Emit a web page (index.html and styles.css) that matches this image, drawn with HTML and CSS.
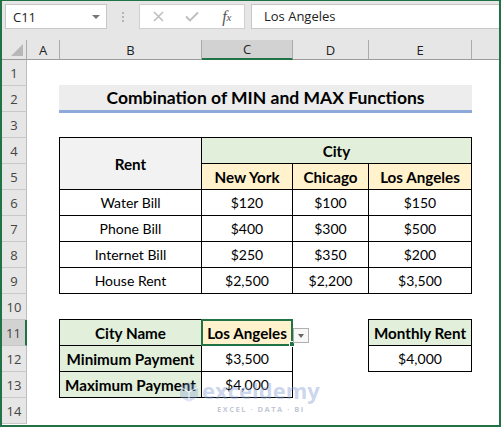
FILE: index.html
```html
<!DOCTYPE html>
<html>
<head>
<meta charset="utf-8">
<link rel="stylesheet" href="styles.css">
</head>
<body>
<div class="window">
  <div class="formula-bar">
    <div class="name-box"><span>C11</span><span class="caret"></span></div>
    <div class="dots"><span></span><span></span><span></span></div>
    <div class="fx-box">
      <span class="fx-btn"><svg width="11" height="11" viewBox="0 0 11 11"><path d="M1 1 L10 10 M10 1 L1 10" stroke="#bdbdbd" stroke-width="1.5" fill="none"/></svg></span>
      <span class="fx-btn"><svg width="14" height="11" viewBox="0 0 14 11"><path d="M1 5.5 L5 9.5 L13 1.5" stroke="#bdbdbd" stroke-width="1.8" fill="none"/></svg></span>
      <span class="fx-btn fx"><i>f</i><sub>x</sub></span>
    </div>
    <div class="formula-input">Los Angeles</div>
  </div>

  <div class="sheet">
    <div class="corner"><svg width="25" height="19" viewBox="0 0 25 19"><polygon points="21,16 21,4 9,16" fill="#b7b7b7"/></svg></div>
    <div class="ch">A</div>
    <div class="ch">B</div>
    <div class="ch sel">C</div>
    <div class="ch">D</div>
    <div class="ch">E</div>
    <div class="ch ch-last"></div>

    <div class="rh r1">1</div>
    <div class="rh r2">2</div>
    <div class="rh r3">3</div>
    <div class="rh r4">4</div>
    <div class="rh r5">5</div>
    <div class="rh r6">6</div>
    <div class="rh r7">7</div>
    <div class="rh r8">8</div>
    <div class="rh r9">9</div>
    <div class="rh r10">10</div>
    <div class="rh r11 sel">11</div>
    <div class="rh r12">12</div>
    <div class="rh r13">13</div>
    <div class="rh r14">14</div>

    <div class="title">Combination of MIN and MAX Functions</div>

    <div class="tbl tbl-rent">
      <div class="c bold gray span-rows">Rent</div>
      <div class="c bold green span-cols">City</div>
      <div class="c bold orange">New York</div>
      <div class="c bold orange">Chicago</div>
      <div class="c bold orange">Los Angeles</div>
      <div class="c">Water Bill</div><div class="c">$120</div><div class="c">$100</div><div class="c">$150</div>
      <div class="c">Phone Bill</div><div class="c">$400</div><div class="c">$300</div><div class="c">$500</div>
      <div class="c">Internet Bill</div><div class="c">$250</div><div class="c">$350</div><div class="c">$200</div>
      <div class="c">House Rent</div><div class="c">$2,500</div><div class="c">$2,200</div><div class="c">$3,500</div>
    </div>

    <div class="tbl tbl-pay">
      <div class="c bold green">City Name</div>
      <div class="c bold orange active">Los Angeles<span class="handle"></span><span class="dropdown"><span class="dd-arrow"></span></span></div>
      <div class="c bold green">Minimum Payment</div>
      <div class="c">$3,500</div>
      <div class="c bold green">Maximum Payment</div>
      <div class="c">$4,000</div>
    </div>

    <div class="tbl tbl-month">
      <div class="c bold green">Monthly Rent</div>
      <div class="c">$4,000</div>
    </div>

    <div class="watermark">
      <svg class="wm-icon" width="22" height="22" viewBox="0 0 22 22">
        <path d="M11 1 L20 6 L20 16 L11 21 L2 16 L2 6 Z" fill="rgba(140,165,215,0.35)"/>
        <path d="M11 11 L20 6 M11 11 L2 6 M11 11 L11 21" stroke="rgba(255,255,255,0.7)" stroke-width="1.2" fill="none"/>
      </svg>
      <div class="wm-text">
        <div class="wm-name">exceldemy</div>
        <div class="wm-tag">EXCEL · DATA · BI</div>
      </div>
    </div>
  </div>
</div>
</body>
</html>
```

FILE: styles.css
```css
* { box-sizing: border-box; }
body { margin: 0; }

.window {
  width: 501px;
  height: 427px;
  border-style: solid;
  border-color: #217346;
  border-width: 1px 2px 2px 2px;
  background: #e6e6e6;
  display: flex;
  flex-direction: column;
  overflow: hidden;
  font-family: "Open Sans", "Noto Sans", sans-serif;
}

/* formula bar */
.formula-bar {
  height: 39px;
  flex: none;
  display: flex;
  align-items: flex-start;
  padding: 3px 0 0 3px;
}
.name-box {
  width: 102px;
  height: 25px;
  background: #fff;
  border: 1px solid #c6c6c6;
  display: flex;
  align-items: center;
  justify-content: space-between;
  padding: 0 6px 0 7px;
  font-size: 13px;
  color: #222;
}
.caret {
  width: 0;
  height: 0;
  border-left: 4px solid transparent;
  border-right: 4px solid transparent;
  border-top: 4px solid #777;
}
.dots {
  width: 32px;
  height: 25px;
  display: flex;
  flex-direction: column;
  align-items: center;
  justify-content: center;
  gap: 2px;
}
.dots span {
  width: 2px;
  height: 2px;
  background: #b4b4b4;
}
.fx-box {
  width: 106px;
  height: 25px;
  background: #fff;
  border: 1px solid #d0d0d0;
  display: flex;
  padding-left: 1px;
}
.fx-btn {
  width: 35px;
  height: 23px;
  display: flex;
  align-items: center;
  justify-content: center;
}
.fx {
  font-family: "Liberation Serif", serif;
  font-size: 16px;
  color: #555;
  align-items: center;
}
.fx i { font-style: italic; }
.fx sub { font-size: 11px; font-style: italic; vertical-align: -3px; }
.formula-input {
  flex: 1;
  height: 25px;
  margin-left: 6px;
  background: #fff;
  border: 1px solid #c6c6c6;
  border-right: none;
  padding-left: 12px;
  font-size: 13px;
  line-height: 23px;
  color: #222;
}

/* sheet grid */
.sheet {
  flex: 1;
  position: relative;
  display: grid;
  grid-template-columns: 25px 33px 142px 91px 76px 103px 1fr;
  grid-template-rows: 20px repeat(14, 26px) 1fr;
  background: #fff;
}
.corner {
  background: #e6e6e6;
  border-right: 1px solid #ababab;
  border-bottom: 1px solid #9b9b9b;
}
.corner svg { display: block; }
.ch {
  background: #e6e6e6;
  border-right: 1px solid #ababab;
  border-bottom: 1px solid #9b9b9b;
  display: flex;
  align-items: center;
  justify-content: center;
  font-size: 13px;
  color: #222;
}
.ch-last { border-right: none; }
.ch.sel {
  background: #d2d2d2;
  border-bottom: 2px solid #217346;
}
.rh {
  grid-column: 1;
  background: #e6e6e6;
  border-right: 1px solid #bdbdbd;
  border-bottom: 1px solid #c8c8c8;
  display: flex;
  align-items: center;
  justify-content: center;
  font-size: 13px;
  color: #444;
}
.rh.sel {
  background: #d2d2d2;
  border-right: 2px solid #217346;
}
.r1 { grid-row: 2; } .r2 { grid-row: 3; } .r3 { grid-row: 4; } .r4 { grid-row: 5; }
.r5 { grid-row: 6; } .r6 { grid-row: 7; } .r7 { grid-row: 8; } .r8 { grid-row: 9; }
.r9 { grid-row: 10; } .r10 { grid-row: 11; } .r11 { grid-row: 12; } .r12 { grid-row: 13; }
.r13 { grid-row: 14; } .r14 { grid-row: 15; }

/* title */
.title {
  grid-column: 3 / 7;
  grid-row: 3;
  align-self: start;
  justify-self: start;
  margin: -1px 0 0 -1px;
  width: 413px;
  height: 28px;
  background: #ededed;
  border-bottom: 3px solid #8eaadb;
  display: flex;
  align-items: center;
  justify-content: center;
  font-family: "Lato", sans-serif;
  font-weight: 700;
  font-size: 17.5px;
  color: #000;
}

/* tables */
.tbl {
  display: grid;
  gap: 1px;
  padding: 1px;
  background: #000;
  align-self: start;
  justify-self: start;
  margin: -1px 0 0 -1px;
  font-family: "Lato", sans-serif;
  font-size: 14px;
  color: #000;
}
.tbl-rent {
  grid-column: 3 / 7;
  grid-row: 5 / 11;
  width: 413px;
  height: 157px;
  grid-template-columns: 141px 90px 75px 102px;
  grid-template-rows: repeat(6, 25px);
}
.tbl-pay {
  grid-column: 3 / 5;
  grid-row: 12 / 15;
  width: 234px;
  height: 79px;
  grid-template-columns: 141px 90px;
  grid-template-rows: repeat(3, 25px);
}
.tbl-month {
  grid-column: 6 / 7;
  grid-row: 12 / 14;
  width: 104px;
  height: 53px;
  grid-template-columns: 102px;
  grid-template-rows: repeat(2, 25px);
}
.c {
  background: #fff;
  display: flex;
  align-items: center;
  justify-content: center;
  white-space: nowrap;
}
.bold { font-weight: 700; font-size: 15.2px; }
.gray { background: #f2f2f2; }
.green { background: #e2efda; }
.orange { background: #fff2cc; }
.span-rows { grid-row: 1 / 3; }
.span-cols { grid-column: 2 / 5; }

.active {
  position: relative;
  outline: 2px solid #217346;
  outline-offset: -1px;
}
.handle {
  position: absolute;
  right: -3px;
  bottom: -2px;
  width: 6px;
  height: 6px;
  background: #217346;
  border: 1px solid #fff;
}
.dropdown {
  position: absolute;
  left: calc(100% + 1px);
  top: 8px;
  width: 16px;
  height: 15px;
  background: #f7f7f7;
  border: 1px solid #b0b0b0;
  display: flex;
  align-items: center;
  justify-content: center;
}
.dd-arrow {
  width: 0;
  height: 0;
  border-left: 3.5px solid transparent;
  border-right: 3.5px solid transparent;
  border-top: 4px solid #666;
}

/* watermark overlay */
.watermark {
  position: absolute;
  left: 176px;
  top: 339px;
  display: flex;
  align-items: flex-start;
  gap: 2px;
  pointer-events: none;
}
.wm-icon { margin-top: 2px; }
.wm-text {
  display: flex;
  flex-direction: column;
  align-items: center;
}
.wm-name {
  font-family: "Open Sans", sans-serif;
  font-weight: 700;
  font-size: 22px;
  line-height: 22px;
  color: rgba(140, 165, 215, 0.45);
}
.wm-tag {
  font-family: "Open Sans", sans-serif;
  font-weight: 700;
  font-size: 7.5px;
  line-height: 10px;
  letter-spacing: 1.5px;
  margin-top: 3px;
  color: rgba(150, 160, 185, 0.6);
}
```
